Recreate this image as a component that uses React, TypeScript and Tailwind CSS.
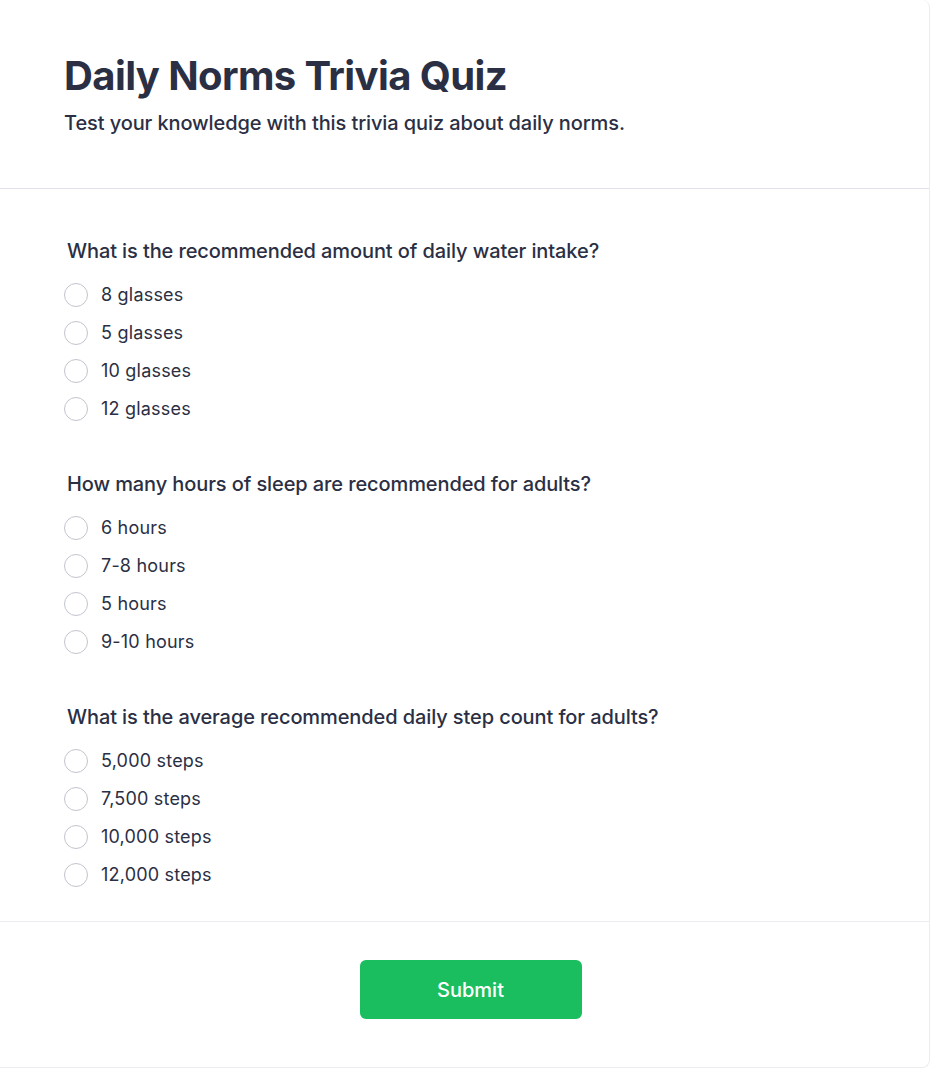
import React from "react";

const questions = [
  {
    q: "What is the recommended amount of daily water intake?",
    options: ["8 glasses", "5 glasses", "10 glasses", "12 glasses"],
  },
  {
    q: "How many hours of sleep are recommended for adults?",
    options: ["6 hours", "7-8 hours", "5 hours", "9-10 hours"],
  },
  {
    q: "What is the average recommended daily step count for adults?",
    options: ["5,000 steps", "7,500 steps", "10,000 steps", "12,000 steps"],
  },
];

export default function App() {
  return (
    <div className="w-[930px] min-h-[1069px] bg-white font-['Inter',sans-serif]">
      <div className="w-[930px] h-[1068px] rounded-r-lg border-r border-b border-[#ececf0] bg-white flex flex-col">
        <div className="px-16 pt-[52px] pb-[51px] border-b border-[#e2e2ee]">
          <h1 className="text-[40px] leading-[48px] font-bold tracking-[-0.6px] text-[#2b2f44]">Daily Norms Trivia Quiz</h1>
          <p className="mt-[9px] text-xl leading-7 font-medium tracking-[-0.1px] text-[#2b2f44]">
            Test your knowledge with this trivia quiz about daily norms.
          </p>
        </div>
        <div className="px-16 pt-12 pb-[27px] flex flex-col gap-[42px] border-b border-[#ececf0]">
          {questions.map((qq, i) => (
            <div key={i}>
              <div className="pl-[3px] text-xl leading-7 font-medium tracking-[-0.1px] text-[#2b2f44]">{qq.q}</div>
              <div className="mt-[11px] flex flex-col">
                {qq.options.map((o) => (
                  <label key={o} className="flex items-center h-[38px] gap-[13px]">
                    <span className="w-6 h-6 rounded-full border-[1.5px] border-[#c2c5ce] bg-white" />
                    <span className="text-lg leading-7 tracking-[0.2px] text-[#2b2f44]">{o}</span>
                  </label>
                ))}
              </div>
            </div>
          ))}
        </div>
        <div className="flex-1 flex justify-center pl-3 pt-[38px] bg-white rounded-br-lg">
          <button className="w-[222px] h-[59px] rounded-md bg-[#1abe5f] text-white text-xl font-medium">Submit</button>
        </div>
      </div>
    </div>
  );
}
